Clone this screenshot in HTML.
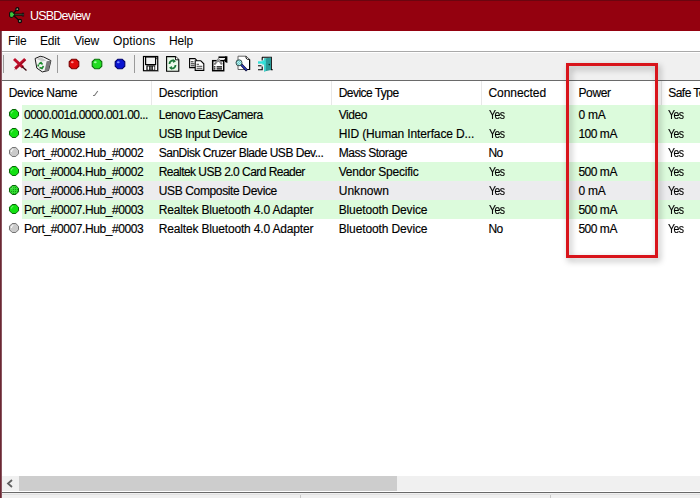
<!DOCTYPE html>
<html><head><meta charset="utf-8">
<style>
*{box-sizing:border-box}
html,body{margin:0;padding:0;width:700px;height:498px;overflow:hidden;background:#fff}
body{position:relative;font-family:"Liberation Sans",sans-serif;font-size:12px;color:#000}
.abs{position:absolute}
svg{position:absolute;overflow:visible}
#title{left:0;top:0;width:700px;height:31px;background:#94010f}
#title .t{left:30px;top:1px;height:31px;line-height:31px;color:#fff;font-size:12.5px;letter-spacing:-0.78px}
#lborder{left:0;top:31px;width:2px;height:467px;background:linear-gradient(90deg,#6b2833 0 1px,#8a5560 1px 2px)}
#menu{left:2px;top:31px;width:698px;height:20px;background:#fff}
#menu span{position:absolute;top:0;line-height:20px;font-size:12px;letter-spacing:-0.2px}
#menuline{left:2px;top:51px;width:698px;height:1px;background:#a9a9a9}
#tb{left:2px;top:53px;width:698px;height:27px;background:#f0f0f0}
#tbline{left:2px;top:80px;width:698px;height:1px;background:#6a6a6a}
.sep{position:absolute;top:55px;width:1px;height:18px;background:#9a9a9a}
.hs{position:absolute;top:81px;width:1px;height:24px;background:#e8e8e8}
.tx{position:absolute;white-space:nowrap;-webkit-text-stroke:0.15px #000}
.bg{position:absolute;left:22px;width:678px;height:19px}
.dot{position:absolute;left:9px;width:10px;height:10px;border-radius:50%}
.g{background:radial-gradient(circle at 35% 35%,#5cff5c 0,#1fe01f 45%,#10c010 100%);box-shadow:inset 0 0 0 1px #0a8a0a}
.g5{background:radial-gradient(circle,#0c8a0c 0 0.6px,transparent 0.9px) 0 0/2.5px 2.5px,radial-gradient(circle at 35% 35%,#4ce84c 0,#22c822 60%,#18a818 100%);box-shadow:inset 0 0 0 1px #0a6a0a}
.gr{background:radial-gradient(circle at 35% 35%,#eaeaea 0,#cdcdcd 50%,#bdbdbd 100%);box-shadow:inset 0 0 0 1px #8a8a8a}
#sb{left:2px;top:476px;width:698px;height:15px;background:#f0f0f0}
#thumb{left:19px;top:476px;width:378px;height:15px;background:#cdcdcd}
#sbline{left:2px;top:492px;width:698px;height:1px;background:#696969}
#status{left:2px;top:493px;width:698px;height:5px;background:#f0f0f0}
#redbox{left:566px;top:63px;width:92px;height:195px;border:3px solid #d8141b;filter:drop-shadow(2px 3px 3px rgba(0,0,0,.32))}
</style></head>
<body>
<div id="title" class="abs">
  <div class="abs" style="left:0;top:0;width:700px;height:1px;background:#6a0610"></div>
  <svg style="left:8px;top:6px" width="18" height="18" viewBox="0 0 18 18">
    <path d="M5.5 7.5 L9 3.2 M5.5 9.5 L11.8 15" stroke="#1a0606" stroke-width="1.3" fill="none"/>
    <path d="M5 8.6 H15" stroke="#0a0a0a" stroke-width="2.2" fill="none"/>
    <path d="M6 8.6 H14.5" stroke="#2e5a2e" stroke-width="0.9" fill="none"/>
    <circle cx="9.3" cy="3.2" r="1.5" fill="#8aa07a" stroke="#0a0a0a" stroke-width="1.2"/>
    <circle cx="11.9" cy="15" r="1.6" fill="#8aa07a" stroke="#0a0a0a" stroke-width="1.2"/>
    <path d="M1.6 7 Q1.6 5.8 3 5.8 H4.6 L6.6 8.6 L4.6 11.4 H3 Q1.6 11.4 1.6 10 Z" fill="#3cc83c" stroke="#0a0a0a" stroke-width="1"/>
    <rect x="14.3" y="7.2" width="1.4" height="2.8" fill="#9aa49a" stroke="#0a0a0a" stroke-width="0.8"/>
  </svg>
  <div class="abs t">USBDeview</div>
</div>
<div id="lborder" class="abs"></div>
<div id="menu" class="abs">
  <span style="left:6px">File</span>
  <span style="left:38px">Edit</span>
  <span style="left:72px">View</span>
  <span style="left:111px;letter-spacing:0.15px">Options</span>
  <span style="left:167px">Help</span>
</div>
<div id="menuline" class="abs"></div>
<div id="tb" class="abs"></div>
<div id="tbline" class="abs"></div>
<div class="sep" style="left:3px"></div>
<div class="sep" style="left:57px"></div>
<div class="sep" style="left:134px"></div>
<!-- toolbar icons -->
<svg style="left:12px;top:57px" width="16" height="15" viewBox="0 0 16 15">
  <path d="M2 2 L11 10.3" stroke="#bf0e2a" stroke-width="3"/>
  <path d="M13.2 2.2 L3.2 11.6" stroke="#bf0e2a" stroke-width="3"/>
  <path d="M2.6 12.6 L13.8 2.6" stroke="#7a0a1a" stroke-width="0.7"/>
  <path d="M10 9.4 L14.5 13.4" stroke="#3a0a10" stroke-width="1.4"/>
</svg>
<svg style="left:34px;top:55px" width="18" height="18" viewBox="0 0 18 18">
  <path d="M1.1 3.5 L6.2 1.3 L9.7 2 L16.9 5.6 L14.5 15.5 L8.3 16.9 L2.8 13.1 Z" fill="#f4f4f4" stroke="#1a1a1a" stroke-width="1"/>
  <path d="M12.6 6.2 L16.9 5.6 L14.5 15.5 L10.5 16.3 Z" fill="#7c7c7c"/>
  <path d="M2.5 4 L6.5 2.3 L12.5 5.5 L8.5 6.5 Z" fill="#c8c8c8"/>
  <path d="M5 9 L7 7.5 L8.5 9.5 M9.5 11 L8 13.5 L5.5 12.5 M4.5 11.5 L4 9.5" stroke="#1a8a2a" stroke-width="1.6" fill="none"/>
</svg>
<svg style="left:68px;top:58px" width="12" height="12" viewBox="0 0 12 12">
  <path d="M3.8 1.2 H8.2 L10.8 3.8 V8.2 L8.2 10.8 H3.8 L1.2 8.2 V3.8 Z" fill="#e00a0a" stroke="#7a0000" stroke-width="1.1"/>
  <ellipse cx="4.3" cy="4.2" rx="1.4" ry="1" fill="#ff9090"/>
</svg>
<svg style="left:91px;top:58px" width="12" height="12" viewBox="0 0 12 12">
  <path d="M3.8 1.2 H8.2 L10.8 3.8 V8.2 L8.2 10.8 H3.8 L1.2 8.2 V3.8 Z" fill="#22dd22" stroke="#0a700a" stroke-width="1.1"/>
  <ellipse cx="4.3" cy="4.2" rx="1.4" ry="1" fill="#a0ffa0"/>
</svg>
<svg style="left:114px;top:58px" width="12" height="12" viewBox="0 0 12 12">
  <path d="M3.8 1.2 H8.2 L10.8 3.8 V8.2 L8.2 10.8 H3.8 L1.2 8.2 V3.8 Z" fill="#0a14d0" stroke="#00006a" stroke-width="1.1"/>
  <ellipse cx="4.3" cy="4.2" rx="1.4" ry="1" fill="#8090ff"/>
</svg>
<!-- floppy -->
<svg style="left:143px;top:56px" width="16" height="16" viewBox="0 0 16 16">
  <rect x="0.5" y="0.5" width="14.2" height="14.2" fill="#fff" stroke="#000" stroke-width="1.2"/>
  <rect x="2.6" y="1" width="10" height="7.6" fill="#f2f2f2" stroke="#000" stroke-width="1.2"/>
  <rect x="3.4" y="9.4" width="8.8" height="5" fill="#000"/>
  <rect x="4.6" y="10.4" width="1.6" height="3.4" fill="#fff"/>
  <rect x="7.2" y="10.4" width="1.6" height="3.4" fill="#808080"/>
  <rect x="9.8" y="10.4" width="1.6" height="3.4" fill="#fff"/>
  <rect x="13.4" y="1.4" width="0.9" height="1.8" fill="#000"/>
  <path d="M15.4 1.5 V15.4 H1.5" stroke="#9a9a9a" stroke-width="0.8" fill="none"/>
</svg>
<!-- refresh doc -->
<svg style="left:166px;top:56px" width="14" height="16" viewBox="0 0 14 16">
  <path d="M0.6 0.6 H9.5 L12.8 3.8 V15.2 H0.6 Z" fill="#eaf8ea" stroke="#000" stroke-width="1.1"/>
  <path d="M9.5 0.6 V3.8 H12.8" fill="#fff" stroke="#000" stroke-width="0.9"/>
  <path d="M3.5 8 A3.3 3.3 0 0 1 8.5 5" stroke="#1d7a3a" stroke-width="1.8" fill="none"/>
  <path d="M7 3.2 L10 5.2 L7.2 7 Z" fill="#1d7a3a"/>
  <path d="M9.5 9 A3.3 3.3 0 0 1 4.6 12" stroke="#1d7a3a" stroke-width="1.8" fill="none"/>
  <path d="M6 13.8 L3 11.8 L5.8 10 Z" fill="#1d7a3a"/>
</svg>
<!-- copy -->
<svg style="left:189px;top:58px" width="16" height="13" viewBox="0 0 16 13">
  <path d="M0.6 0.6 H6 L7.6 2.2 V9.6 H0.6 Z" fill="#fff" stroke="#000" stroke-width="1.1"/>
  <path d="M1.8 3.8 H4.5 M1.8 5.8 H5.5 M1.8 7.8 H5.5" stroke="#000" stroke-width="0.9"/>
  <path d="M6.2 2.8 H11.8 L14.8 5.8 V12.4 H6.2 Z" fill="#fff" stroke="#000" stroke-width="1.1"/>
  <path d="M7.6 6.3 H10 M7.6 8.3 H13.3 M7.6 10.3 H13.3" stroke="#333" stroke-width="0.9"/>
</svg>
<!-- properties -->
<svg style="left:211px;top:56px" width="17" height="16" viewBox="0 0 17 16">
  <defs><pattern id="chk" width="2" height="2" patternUnits="userSpaceOnUse"><rect width="2" height="2" fill="#fff"/><rect width="1" height="1" fill="#000"/><rect x="1" y="1" width="1" height="1" fill="#000"/></pattern></defs>
  <rect x="1.7" y="4.7" width="11" height="10" fill="#fff" stroke="#000" stroke-width="1.5"/>
  <path d="M2.2 8.5 L7.5 1.8 L11.8 8 L10 9 L7.5 5 L4.2 9 Z" fill="#7a7a7a"/><path d="M5 6.5 L7.5 3.5 L10 7" stroke="#fff" stroke-width="0.6" stroke-dasharray="0.8 0.8" fill="none"/>
  <path d="M7.5 1.2 H14.5" stroke="#000" stroke-width="1.6"/>
  <path d="M14 0.2 L16.4 0.2 V7 L14 6 Z" fill="#000"/>
  <path d="M12.6 4.8 L14.8 3.2" stroke="#000" stroke-width="1.2"/>
  <path d="M2.8 10.8 H4.4 M5.6 10.8 H11 M2.8 12.8 H4.4 M5.6 12.8 H11" stroke="#000" stroke-width="1.2"/>
</svg>
<!-- find -->
<svg style="left:235px;top:55px" width="16" height="17" viewBox="0 0 16 17">
  <defs><pattern id="lens" width="2" height="2" patternUnits="userSpaceOnUse"><rect width="2" height="2" fill="#b8f0f0"/><rect width="1" height="1" fill="#70c8c8"/><rect x="1" y="1" width="1" height="1" fill="#70c8c8"/></pattern></defs>
  <path d="M3 1.2 H11 L14.6 4.4 V14.5 H3 Z" fill="#fff" stroke="#555" stroke-width="0.9"/>
  <path d="M14.6 4.4 V14.5 H10" fill="none" stroke="#000" stroke-width="1.2"/>
  <path d="M11 1.2 V3.2 L12.5 4.4 H14.6" fill="none" stroke="#000" stroke-width="0.9"/>
  <path d="M6 9.4 L12 15.6" stroke="#0a0a30" stroke-width="2.8"/>
  <path d="M6.3 9.7 L11.6 15.2" stroke="#3848d8" stroke-width="1.1"/>
  <circle cx="4" cy="7.8" r="3" fill="url(#lens)" stroke="#2a4040" stroke-width="0.9"/>
</svg>
<!-- exit -->
<svg style="left:257px;top:56px" width="17" height="16" viewBox="0 0 17 16">
  <path d="M5.2 1.2 V4.5 M5.2 10.5 V13.7 H1 M5 1.2 H14.3 V13.7 H15.8" stroke="#000" stroke-width="1.1" fill="none"/>
  <path d="M7 2.6 L14 1.6 V14 L7 15.5 Z" fill="#2a9a98"/>
  <path d="M7 2.6 L8.8 2.4 V15 L7 15.5 Z" fill="#40d8d0"/>
  <circle cx="12.3" cy="8.6" r="0.8" fill="#032"/>
  <path d="M1 6.5 H6" stroke="#30e0d8" stroke-width="2.4"/>
  <path d="M5.5 3.6 L9 6.5 L5.5 9.4 Z" fill="#30e0d8"/>
  <path d="M1 9.8 H4.5" stroke="#000" stroke-width="1"/>
</svg>

<div class="hs" style="left:151px"></div>
<div class="hs" style="left:331px"></div>
<div class="hs" style="left:481px"></div>

<div class="hs" style="left:661px"></div>
<svg style="left:92px;top:90px" width="7" height="7" viewBox="0 0 7 7"><path d="M1 5.5 H2.5 L5.8 1" stroke="#7a7a7a" stroke-width="1.1" fill="none"/></svg>

<!-- row backgrounds & dots -->
<div class="bg" style="top:105px;background:#dcfbdc"></div>
<div class="bg" style="top:124px;background:#dcfbdc"></div>
<div class="bg" style="top:162px;background:#dcfbdc"></div>
<div class="bg" style="top:181px;background:#ececee"></div>
<div class="bg" style="top:200px;background:#dcfbdc"></div>
<svg style="left:9px;top:109px" width="10" height="10" viewBox="0 0 10 10"><path d="M3.2 0.5 H6.8 L9.5 3.2 V6.8 L6.8 9.5 H3.2 L0.5 6.8 V3.2 Z" fill="#12e012" stroke="#066406" stroke-width="1"/><path d="M2.3 4.5 Q2.6 2.6 4.3 2.2" stroke="#7af07a" stroke-width="1.1" fill="none"/></svg>
<svg style="left:9px;top:128px" width="10" height="10" viewBox="0 0 10 10"><path d="M3.2 0.5 H6.8 L9.5 3.2 V6.8 L6.8 9.5 H3.2 L0.5 6.8 V3.2 Z" fill="#12e012" stroke="#066406" stroke-width="1"/><path d="M2.3 4.5 Q2.6 2.6 4.3 2.2" stroke="#7af07a" stroke-width="1.1" fill="none"/></svg>
<svg style="left:9px;top:147px" width="10" height="10" viewBox="0 0 10 10"><path d="M3.2 0.5 H6.8 L9.5 3.2 V6.8 L6.8 9.5 H3.2 L0.5 6.8 V3.2 Z" fill="#cacaca" stroke="#727272" stroke-width="1"/><path d="M2.3 5 Q2.4 2.8 4.3 2.2" stroke="#f8f8f8" stroke-width="1.2" fill="none"/></svg>
<svg style="left:9px;top:166px" width="10" height="10" viewBox="0 0 10 10"><path d="M3.2 0.5 H6.8 L9.5 3.2 V6.8 L6.8 9.5 H3.2 L0.5 6.8 V3.2 Z" fill="#12e012" stroke="#066406" stroke-width="1"/><path d="M2.3 4.5 Q2.6 2.6 4.3 2.2" stroke="#7af07a" stroke-width="1.1" fill="none"/></svg>
<svg style="left:9px;top:185px" width="10" height="10" viewBox="0 0 10 10"><defs><pattern id="dp" width="2" height="2" patternUnits="userSpaceOnUse"><rect width="2" height="2" fill="#30dc30"/><rect width="1" height="1" fill="#149a14"/></pattern></defs><path d="M3.2 0.5 H6.8 L9.5 3.2 V6.8 L6.8 9.5 H3.2 L0.5 6.8 V3.2 Z" fill="url(#dp)" stroke="#066406" stroke-width="1"/><path d="M2.3 4.5 Q2.6 2.6 4.3 2.2" stroke="#6ae06a" stroke-width="1.1" fill="none"/></svg>
<svg style="left:9px;top:204px" width="10" height="10" viewBox="0 0 10 10"><path d="M3.2 0.5 H6.8 L9.5 3.2 V6.8 L6.8 9.5 H3.2 L0.5 6.8 V3.2 Z" fill="#12e012" stroke="#066406" stroke-width="1"/><path d="M2.3 4.5 Q2.6 2.6 4.3 2.2" stroke="#7af07a" stroke-width="1.1" fill="none"/></svg>
<svg style="left:9px;top:223px" width="10" height="10" viewBox="0 0 10 10"><path d="M3.2 0.5 H6.8 L9.5 3.2 V6.8 L6.8 9.5 H3.2 L0.5 6.8 V3.2 Z" fill="#cacaca" stroke="#727272" stroke-width="1"/><path d="M2.3 5 Q2.4 2.8 4.3 2.2" stroke="#f8f8f8" stroke-width="1.2" fill="none"/></svg>

<div class="tx" style="left:8.7px;top:81px;height:24px;line-height:24px;letter-spacing:-0.335px">Device Name</div>
<div class="tx" style="left:158.7px;top:81px;height:24px;line-height:24px;letter-spacing:-0.075px">Description</div>
<div class="tx" style="left:338.7px;top:81px;height:24px;line-height:24px;letter-spacing:-0.536px">Device Type</div>
<div class="tx" style="left:488.5px;top:81px;height:24px;line-height:24px;letter-spacing:-0.059px">Connected</div>
<div class="tx" style="left:578.4px;top:81px;height:24px;line-height:24px;letter-spacing:-0.329px">Power</div>
<div class="tx" style="left:668.3px;top:81px;height:24px;line-height:24px;letter-spacing:-0.55px">Safe To</div>
<div class="tx" style="left:24px;top:106px;height:19px;line-height:19px;letter-spacing:-0.542px">0000.001d.0000.001.00...</div>
<div class="tx" style="left:158.7px;top:106px;height:19px;line-height:19px;letter-spacing:-0.474px">Lenovo EasyCamera</div>
<div class="tx" style="left:338.7px;top:106px;height:19px;line-height:19px;letter-spacing:-0.45px">Video</div>
<div class="tx" style="left:488.5px;top:106px;height:19px;line-height:19px;letter-spacing:-0.6px;transform:scaleX(0.876);transform-origin:0.00px 50%">Yes</div>
<div class="tx" style="left:578.4px;top:106px;height:19px;line-height:19px;letter-spacing:-0.201px">0 mA</div>
<div class="tx" style="left:668.3px;top:106px;height:19px;line-height:19px;letter-spacing:-0.6px;transform:scaleX(0.876);transform-origin:0.00px 50%">Yes</div>
<div class="tx" style="left:24px;top:125px;height:19px;line-height:19px;letter-spacing:-0.444px">2.4G Mouse</div>
<div class="tx" style="left:158.7px;top:125px;height:19px;line-height:19px;letter-spacing:-0.402px">USB Input Device</div>
<div class="tx" style="left:338.7px;top:125px;height:19px;line-height:19px;letter-spacing:-0.128px">HID (Human Interface D...</div>
<div class="tx" style="left:488.5px;top:125px;height:19px;line-height:19px;letter-spacing:-0.6px;transform:scaleX(0.876);transform-origin:0.00px 50%">Yes</div>
<div class="tx" style="left:578.4px;top:125px;height:19px;line-height:19px;letter-spacing:-0.47px">100 mA</div>
<div class="tx" style="left:668.3px;top:125px;height:19px;line-height:19px;letter-spacing:-0.6px;transform:scaleX(0.876);transform-origin:0.00px 50%">Yes</div>
<div class="tx" style="left:24px;top:144px;height:19px;line-height:19px;letter-spacing:-0.409px">Port_#0002.Hub_#0002</div>
<div class="tx" style="left:158.7px;top:144px;height:19px;line-height:19px;letter-spacing:-0.494px">SanDisk Cruzer Blade USB Dev...</div>
<div class="tx" style="left:338.7px;top:144px;height:19px;line-height:19px;letter-spacing:-0.487px">Mass Storage</div>
<div class="tx" style="left:488.5px;top:144px;height:19px;line-height:19px;letter-spacing:-0.566px">No</div>
<div class="tx" style="left:668.3px;top:144px;height:19px;line-height:19px;letter-spacing:-0.6px;transform:scaleX(0.876);transform-origin:0.00px 50%">Yes</div>
<div class="tx" style="left:24px;top:163px;height:19px;line-height:19px;letter-spacing:-0.409px">Port_#0004.Hub_#0002</div>
<div class="tx" style="left:158.7px;top:163px;height:19px;line-height:19px;letter-spacing:-0.544px">Realtek USB 2.0 Card Reader</div>
<div class="tx" style="left:338.7px;top:163px;height:19px;line-height:19px;letter-spacing:-0.242px">Vendor Specific</div>
<div class="tx" style="left:488.5px;top:163px;height:19px;line-height:19px;letter-spacing:-0.6px;transform:scaleX(0.876);transform-origin:0.00px 50%">Yes</div>
<div class="tx" style="left:578.4px;top:163px;height:19px;line-height:19px;letter-spacing:-0.47px">500 mA</div>
<div class="tx" style="left:668.3px;top:163px;height:19px;line-height:19px;letter-spacing:-0.6px;transform:scaleX(0.876);transform-origin:0.00px 50%">Yes</div>
<div class="tx" style="left:24px;top:182px;height:19px;line-height:19px;letter-spacing:-0.409px">Port_#0006.Hub_#0003</div>
<div class="tx" style="left:158.7px;top:182px;height:19px;line-height:19px;letter-spacing:-0.358px">USB Composite Device</div>
<div class="tx" style="left:338.7px;top:182px;height:19px;line-height:19px;letter-spacing:0.041px">Unknown</div>
<div class="tx" style="left:488.5px;top:182px;height:19px;line-height:19px;letter-spacing:-0.6px;transform:scaleX(0.876);transform-origin:0.00px 50%">Yes</div>
<div class="tx" style="left:578.4px;top:182px;height:19px;line-height:19px;letter-spacing:-0.201px">0 mA</div>
<div class="tx" style="left:668.3px;top:182px;height:19px;line-height:19px;letter-spacing:-0.6px;transform:scaleX(0.876);transform-origin:0.00px 50%">Yes</div>
<div class="tx" style="left:24px;top:201px;height:19px;line-height:19px;letter-spacing:-0.409px">Port_#0007.Hub_#0003</div>
<div class="tx" style="left:158.7px;top:201px;height:19px;line-height:19px;letter-spacing:-0.165px">Realtek Bluetooth 4.0 Adapter</div>
<div class="tx" style="left:338.7px;top:201px;height:19px;line-height:19px;letter-spacing:-0.13px">Bluetooth Device</div>
<div class="tx" style="left:488.5px;top:201px;height:19px;line-height:19px;letter-spacing:-0.6px;transform:scaleX(0.876);transform-origin:0.00px 50%">Yes</div>
<div class="tx" style="left:578.4px;top:201px;height:19px;line-height:19px;letter-spacing:-0.47px">500 mA</div>
<div class="tx" style="left:668.3px;top:201px;height:19px;line-height:19px;letter-spacing:-0.6px;transform:scaleX(0.876);transform-origin:0.00px 50%">Yes</div>
<div class="tx" style="left:24px;top:220px;height:19px;line-height:19px;letter-spacing:-0.409px">Port_#0007.Hub_#0003</div>
<div class="tx" style="left:158.7px;top:220px;height:19px;line-height:19px;letter-spacing:-0.165px">Realtek Bluetooth 4.0 Adapter</div>
<div class="tx" style="left:338.7px;top:220px;height:19px;line-height:19px;letter-spacing:-0.13px">Bluetooth Device</div>
<div class="tx" style="left:488.5px;top:220px;height:19px;line-height:19px;letter-spacing:-0.566px">No</div>
<div class="tx" style="left:578.4px;top:220px;height:19px;line-height:19px;letter-spacing:-0.47px">500 mA</div>
<div class="tx" style="left:668.3px;top:220px;height:19px;line-height:19px;letter-spacing:-0.6px;transform:scaleX(0.876);transform-origin:0.00px 50%">Yes</div>

<div id="redbox" class="abs"></div>

<div id="sb" class="abs"></div>
<div id="thumb" class="abs"></div>
<svg style="left:6px;top:479px" width="8" height="9" viewBox="0 0 8 9"><path d="M6 1 L2 4.5 L6 8" stroke="#606060" stroke-width="1.8" fill="none"/></svg>
<div id="sbline" class="abs"></div>
<div id="status" class="abs"></div>
<div class="abs" style="left:2px;top:494px;width:698px;height:1px;background:#e2e2e2"></div><div class="abs" style="left:300px;top:495px;width:1px;height:3px;background:#c8c8c8"></div>
<div class="abs" style="left:550px;top:495px;width:1px;height:3px;background:#c8c8c8"></div>
</body></html>
